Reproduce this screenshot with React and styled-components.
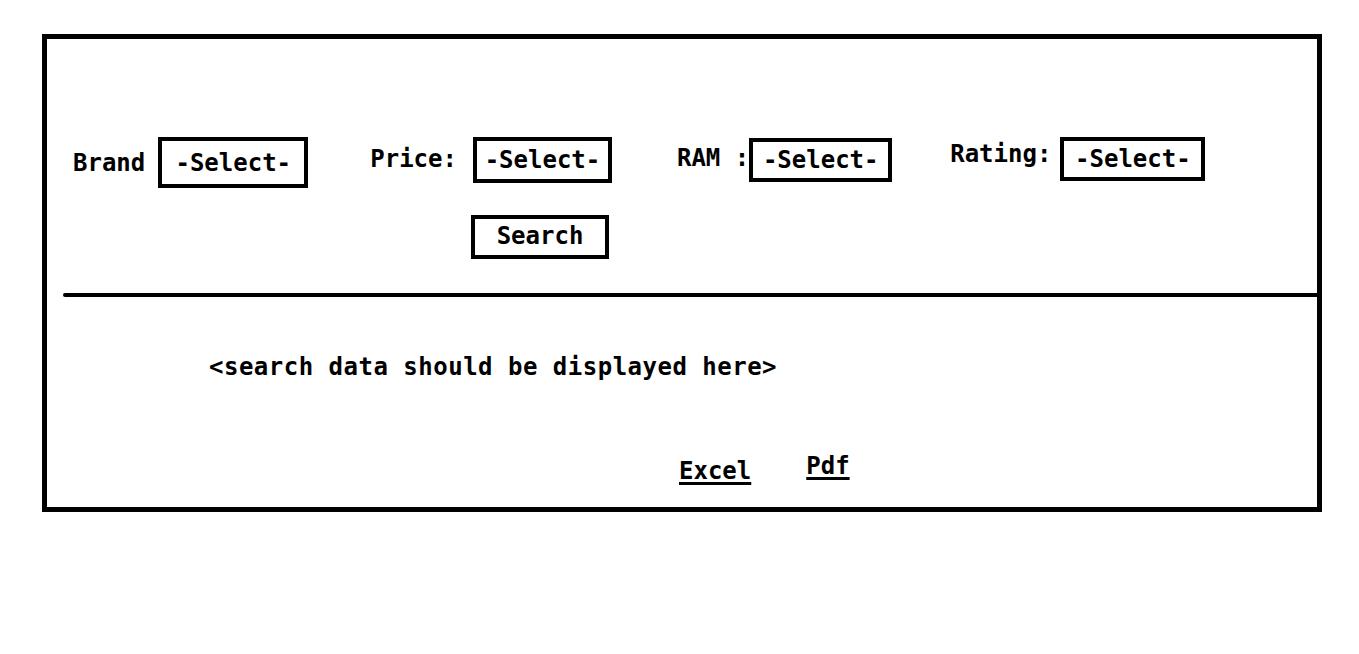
import styled, { createGlobalStyle } from "styled-components";

const GlobalStyle = createGlobalStyle`
  body {
    margin: 0;
    background: #fff;
    color: #000;
    font-family: "DejaVu Sans Mono", "Liberation Mono", monospace;
    font-weight: bold;
    font-size: 24px;
  }
`;

const filters = [
  { label: "Brand", offset: 0, gap: 13, height: 51, width: 150 },
  { label: "Price:", offset: 62, gap: 16, height: 46, width: 139, lift: 1 },
  { label: "RAM :", offset: 65, gap: 0, height: 44, width: 143, lift: 2, top: 1 },
  { label: "Rating:", offset: 58, gap: 9, height: 44, width: 145, lift: 5 },
];

function App() {
  return (
    <>
      <GlobalStyle />
      <Frame>
        <FilterRow>
          {filters.map((f) => (
            <FilterGroup key={f.label} $offset={f.offset} $gap={f.gap} $top={f.top || 0}>
              <Label $lift={f.lift || 0}>{f.label}</Label>
              <SelectBox $w={f.width} $h={f.height}>
                -Select-
              </SelectBox>
            </FilterGroup>
          ))}
        </FilterRow>
        <ButtonRow>
          <SearchButton>Search</SearchButton>
        </ButtonRow>
        <Divider />
        <Results>&lt;search data should be displayed here&gt;</Results>
        <Exports>
          <ExportLink $drop={5}>Excel</ExportLink>
          <ExportLink $drop={0}>Pdf</ExportLink>
        </Exports>
      </Frame>
    </>
  );
}

const Frame = styled.div`
  box-sizing: border-box;
  width: 1280px;
  height: 478px;
  margin: 34px 0 0 42px;
  border: 5px solid #000;
  display: flex;
  flex-direction: column;
`;

const FilterRow = styled.div`
  display: flex;
  align-items: flex-start;
  padding: 98px 0 0 26px;
`;

const FilterGroup = styled.div`
  display: flex;
  align-items: center;
  gap: ${(p) => p.$gap}px;
  margin-left: ${(p) => p.$offset}px;
  margin-top: ${(p) => p.$top}px;
`;

const Label = styled.span`
  line-height: 24px;
  margin-bottom: ${(p) => p.$lift * 2}px;
`;

const SelectBox = styled.div`
  box-sizing: border-box;
  width: ${(p) => p.$w}px;
  height: ${(p) => p.$h}px;
  border: 4px solid #000;
  display: flex;
  align-items: center;
  justify-content: center;
  line-height: 24px;
`;

const ButtonRow = styled.div`
  display: flex;
  padding-left: 424px;
  margin-top: 27px;
`;

const SearchButton = styled.div`
  box-sizing: border-box;
  width: 138px;
  height: 44px;
  border: 4px solid #000;
  display: flex;
  align-items: center;
  justify-content: center;
  line-height: 24px;
  padding-bottom: 3px;
`;

const Divider = styled.div`
  height: 4px;
  margin: 34px 0 0 16px;
  background: #000;
  border-radius: 2px 0 0 2px;
`;

const Results = styled.div`
  margin-top: 58px;
  padding-left: 162px;
  line-height: 24px;
  letter-spacing: 0.5px;
`;

const Exports = styled.div`
  display: flex;
  align-items: flex-start;
  gap: 55px;
  margin-top: 75px;
  padding-left: 632px;
`;

const ExportLink = styled.span`
  line-height: 24px;
  margin-top: ${(p) => p.$drop}px;
  text-decoration: underline;
  text-decoration-thickness: 3px;
  text-underline-offset: 3px;
`;

export default App;
